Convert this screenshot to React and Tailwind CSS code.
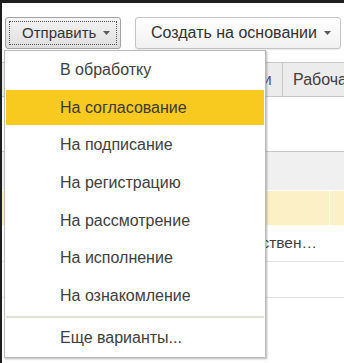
const font = { fontFamily: '"Liberation Sans", Arial, sans-serif' };

const items = [
  "В обработку",
  "На согласование",
  "На подписание",
  "На регистрацию",
  "На рассмотрение",
  "На исполнение",
  "На ознакомление",
];

function Caret() {
  return (
    <svg width="7" height="4" viewBox="0 0 7 4" className="shrink-0">
      <path d="M0 0h7L3.5 4z" fill="#5a5a5a" />
    </svg>
  );
}

export default function App() {
  return (
    <div
      className="relative w-[344px] h-[363px] overflow-hidden bg-white border-t-[3px] border-l-[2px] border-[#1e1e1e] text-[15px] text-[#404040]"
      style={font}
    >
      {/* toolbar */}
      <div className="flex gap-[14px] pl-[3px] pt-[14px]">
        <button className="relative flex h-[32px] w-[116px] shrink-0 items-center rounded-[3px] border border-[#a3a3a3] bg-gradient-to-b from-[#f4f4f4] to-[#dedede] pl-[16px] pr-[10px] text-[15px] text-[#333]">
          <span className="absolute inset-[3px] border border-dotted border-[#555]" />
          <span className="flex-1 text-left">Отправить</span>
          <Caret />
        </button>
        <button className="flex h-[32px] w-[206px] shrink-0 items-center rounded-[3px] border border-[#c4c4c4] bg-gradient-to-b from-white to-[#f1f1f1] pl-[15px] pr-[9px] text-[16px] text-[#333] shadow-[0_1px_1px_rgba(0,0,0,0.08)]">
          <span className="flex-1 whitespace-nowrap text-left">Создать на основании</span>
          <Caret />
        </button>
      </div>

      {/* tabs */}
      <div className="mt-[13px] flex h-[35px] overflow-hidden border-y border-[#c8c8c8] bg-[#ececec] text-[16px]">
        <div className="w-[210px] shrink-0 border-r border-[#c8c8c8]" />
        <div className="flex w-[71px] shrink-0 items-center border-r border-[#c8c8c8] pl-[6px] text-[#5b4da6]">Задачи</div>
        <div className="flex shrink-0 items-center whitespace-nowrap pl-[10px]">Рабочая группа</div>
      </div>

      <div className="h-[54px]" />

      {/* table */}
      <div className="border-t border-[#c8c8c8]">
        <div className="h-[38px] bg-[#f0f0f0]" />
        <div className="flex h-[35px] border-t border-white bg-[#fcf0c6]">
          <div className="w-[328px] border-r border-white" />
          <div className="flex-1" />
        </div>
        <div className="flex h-[37px] items-center justify-end border-b border-[#e3e3e3] pr-[27px] whitespace-nowrap text-[15.5px]">
          Ответствен…
        </div>
        <div className="h-[36px] border-b border-[#e3e3e3]" />
      </div>

      {/* dropdown menu */}
      <div className="absolute left-[2px] top-[47px] w-[262px] h-[308px] border border-[#bcbcbc] bg-white px-[1px] text-[16px] shadow-[1px_1px_2px_rgba(0,0,0,0.3)]">
        {items.map((t, i) => (
          <div key={t} className="h-[37.7px] py-[1.35px]">
            <div
              className={
                "flex h-full items-center pl-[54px] whitespace-nowrap " +
                (i === 1 ? "bg-[#f8c91f] text-[#3a3a3a]" : "")
              }
            >
              {t}
            </div>
          </div>
        ))}
        <div className="my-[1px] h-[2px] bg-[#e4e0d8]" />
        <div className="flex h-[38px] items-center pl-[54px] whitespace-nowrap">Еще варианты...</div>
      </div>
    </div>
  );
}
